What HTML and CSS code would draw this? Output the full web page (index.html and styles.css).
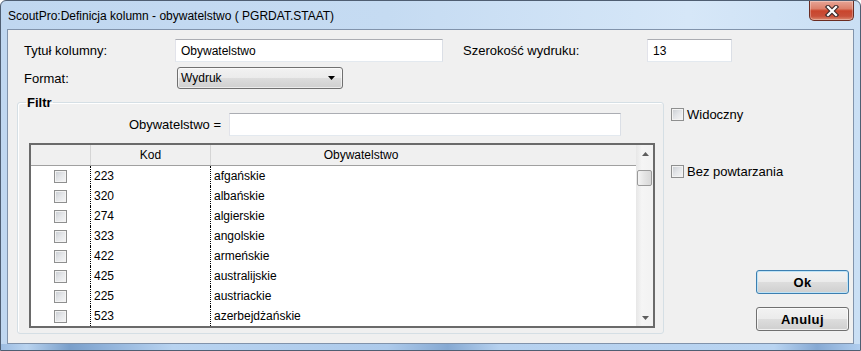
FILE: index.html
```html
<!DOCTYPE html>
<html lang="pl">
<head>
  <meta charset="UTF-8">
  <title>ScoutPro:Definicja kolumn</title>
  <link rel="stylesheet" href="styles.css">
</head>
<body>
  <div class="window">
    <!-- Pasek tytułu -->
    <div class="titlebar">
      <span class="title">ScoutPro:Definicja kolumn - obywatelstwo ( PGRDAT.STAAT)</span>
      <button class="close" title="Zamknij">
        <svg width="16" height="12" viewBox="0 0 16 12">
          <path d="M4 2 L12 10 M12 2 L4 10" stroke="#3b2b2b" stroke-width="4.4" stroke-linecap="square" fill="none"/>
          <path d="M4 2 L12 10 M12 2 L4 10" stroke="#fff" stroke-width="2.2" stroke-linecap="square" fill="none"/>
        </svg>
      </button>
    </div>

    <div class="client">
      <!-- Tytuł i szerokość -->
      <div class="row row-top">
        <label class="lbl lbl-title">Tytuł kolumny:</label>
        <input class="edit edit-title" type="text" value="Obywatelstwo">
        <label class="lbl lbl-width">Szerokość wydruku:</label>
        <input class="edit edit-width" type="text" value="13">
      </div>

      <!-- Format -->
      <div class="row row-format">
        <label class="lbl lbl-format">Format:</label>
        <div class="combo">
          <span>Wydruk</span>
          <svg class="combo-arrow" width="7" height="4" viewBox="0 0 7 4"><path d="M0 0 H7 L3.5 4 Z" fill="#000"/></svg>
        </div>
      </div>

      <div class="main">
        <!-- Filtr -->
        <fieldset class="filter">
          <legend>Filtr</legend>
          <div class="filter-inner">
            <div class="filter-row">
              <label class="filter-label">Obywatelstwo =</label>
              <input class="edit edit-filter" type="text" value="">
            </div>

            <div class="grid">
              <div class="grid-data">
                <div class="grid-row grid-head">
                  <div class="cell"></div>
                  <div class="cell">Kod</div>
                  <div class="cell">Obywatelstwo</div>
                  <div class="cell"></div>
                </div>
                <div class="grid-row"><div class="cell"><span class="check"></span></div><div class="cell">223</div><div class="cell">afgańskie</div><div class="cell"></div></div>
                <div class="grid-row"><div class="cell"><span class="check"></span></div><div class="cell">320</div><div class="cell">albańskie</div><div class="cell"></div></div>
                <div class="grid-row"><div class="cell"><span class="check"></span></div><div class="cell">274</div><div class="cell">algierskie</div><div class="cell"></div></div>
                <div class="grid-row"><div class="cell"><span class="check"></span></div><div class="cell">323</div><div class="cell">angolskie</div><div class="cell"></div></div>
                <div class="grid-row"><div class="cell"><span class="check"></span></div><div class="cell">422</div><div class="cell">armeńskie</div><div class="cell"></div></div>
                <div class="grid-row"><div class="cell"><span class="check"></span></div><div class="cell">425</div><div class="cell">australijskie</div><div class="cell"></div></div>
                <div class="grid-row"><div class="cell"><span class="check"></span></div><div class="cell">225</div><div class="cell">austriackie</div><div class="cell"></div></div>
                <div class="grid-row"><div class="cell"><span class="check"></span></div><div class="cell">523</div><div class="cell">azerbejdżańskie</div><div class="cell"></div></div>
              </div>

              <!-- Pasek przewijania -->
              <div class="scrollbar">
                <div class="sb-btn">
                  <svg width="7" height="4" viewBox="0 0 7 4"><path d="M0 4 L3.5 0 L7 4 Z" fill="#5e5e5e"/></svg>
                </div>
                <div class="sb-track"><div class="sb-thumb"></div></div>
                <div class="sb-btn">
                  <svg width="7" height="4" viewBox="0 0 7 4"><path d="M0 0 H7 L3.5 4 Z" fill="#5e5e5e"/></svg>
                </div>
              </div>
            </div>
          </div>
        </fieldset>

        <!-- Opcje i przyciski -->
        <div class="side">
          <label class="opt"><span class="check"></span>Widoczny</label>
          <label class="opt opt-second"><span class="check"></span>Bez powtarzania</label>
          <div class="buttons">
            <button class="btn btn-default">Ok</button>
            <button class="btn">Anuluj</button>
          </div>
        </div>
      </div>
    </div>
  </div>
</body>
</html>
```

FILE: styles.css
```css
* {
  box-sizing: border-box;
}

html,
body {
  margin: 0;
  padding: 0;
}

body {
  width: 861px;
  height: 351px;
  overflow: hidden;
  background: #fff;
  font-family: "Liberation Sans", Arial, sans-serif;
  font-size: 13px;
  color: #000;
}

/* Okno */
.window {
  display: flex;
  flex-direction: column;
  width: 861px;
  height: 351px;
  padding: 0 6px 6px;
  border: 1px solid #4f5e72;
  border-radius: 6px 6px 0 0;
  background:
    linear-gradient(to right, #9dbde2 0%, #b9d3ef 3%, #7a9fca 8%, #8fb1d9 12%, #b8d3f0 20%, #adcaeb 45%, #86a9d2 52%, #b6d1ef 58%, #b9d4f1 90%, #86a9d3 95%, #b0cdee 100%) left bottom / 100% 6px no-repeat,
    linear-gradient(to right, #c0d7f0 0%, #c5dbf2 45%, #d6e7f8 80%, #cadff4 100%);
}

.titlebar {
  display: flex;
  align-items: flex-start;
  height: 28px;
}

.title {
  padding: 8px 0 0 1px;
  font-size: 12px;
  line-height: 14px;
  color: #000;
}

.close {
  display: flex;
  align-items: center;
  justify-content: center;
  width: 45px;
  height: 20px;
  margin-left: auto;
  padding: 0;
  border: 1px solid #6a2c22;
  border-top: none;
  border-radius: 0 0 5px 5px;
  background: linear-gradient(#e7a596 0%, #dc806b 40%, #c9452c 52%, #c8503a 80%, #dc8a70 100%);
  box-shadow: inset 0 0 0 1px rgba(255, 255, 255, 0.3);
}

.client {
  flex: 1;
  padding: 9px 0 0 9px;
  border: 1px solid #8193ab;
  background: #f0f0f0;
}

/* Wiersze formularza */
.row {
  display: flex;
  align-items: center;
  padding-left: 7px;
}

.row-top {
  height: 23px;
}

.row-format {
  height: 22px;
  margin-top: 5px;
}

.lbl {
  flex: none;
}

.lbl-title {
  width: 151px;
}

.lbl-width {
  width: 184px;
  margin-left: 20px;
}

.lbl-format {
  width: 153px;
}

.edit {
  height: 23px;
  margin: 0;
  padding: 0 5px;
  border: 1px solid;
  border-color: #abadb3 #dbdfe6 #e3e9ef #e2e3ea;
  background: #fff;
  font-family: "Liberation Sans", Arial, sans-serif;
  font-size: 12px;
  color: #000;
  outline: none;
}

.edit-title {
  width: 268px;
}

.edit-width {
  width: 85px;
}

.edit-filter {
  width: 392px;
  margin-left: 8px;
}

.combo {
  display: flex;
  align-items: center;
  width: 166px;
  height: 22px;
  padding: 0 7px 0 3px;
  border: 1px solid #707070;
  border-radius: 3px;
  background: linear-gradient(#f2f2f2 0%, #ebebeb 50%, #dddddd 51%, #cfcfcf 100%);
  box-shadow: inset 0 0 0 1px rgba(255, 255, 255, 0.6);
  font-size: 12px;
}

.combo-arrow {
  margin-left: auto;
}

/* Filtr */
.main {
  display: flex;
  margin-top: 6px;
}

.filter {
  flex: none;
  width: 647px;
  margin: 0;
  padding: 0;
  border: 1px solid #d5dfe5;
  border-radius: 3px;
  box-shadow: inset 1px 1px 0 #fff;
}

.filter legend {
  margin-left: 8px;
  padding: 0 1px;
  font-weight: bold;
  font-size: 13px;
  line-height: 15px;
}

.filter-inner {
  padding: 3px 0 5px 11px;
}

.filter-row {
  display: flex;
  align-items: center;
}

.filter-label {
  width: 192px;
  text-align: right;
}

.grid {
  display: flex;
  width: 626px;
  margin-top: 7px;
  border: 2px solid #6a6a6a;
  background: #fff;
}

.grid-data {
  flex: 1;
}

.grid-row {
  display: grid;
  grid-template-columns: 60px 120px 300px 1fr;
  height: 20px;
  font-size: 12px;
  line-height: 20px;
}

.grid-row .cell {
  padding-left: 3px;
  white-space: nowrap;
}

.grid-row .cell:nth-child(1),
.grid-row .cell:nth-child(2) {
  border-right: 1px dotted #000;
}

.grid-row .cell:first-child {
  display: flex;
  align-items: center;
  justify-content: center;
  padding-left: 0;
}

.grid-head {
  height: 21px;
  border-bottom: 1px solid #a0a0a0;
  background: #f0f0f0;
}

.grid-head .cell {
  padding-left: 0;
  text-align: center;
}

.grid-head .cell:nth-child(1),
.grid-head .cell:nth-child(2) {
  border-right: 1px solid #d5d5d5;
}

.scrollbar {
  display: flex;
  flex-direction: column;
  width: 17px;
  border-left: 1px solid #e8e8e8;
  background: linear-gradient(to right, #e9e9e9, #f5f5f5 30%, #f2f2f2);
}

.sb-btn {
  display: flex;
  align-items: center;
  justify-content: center;
  height: 17px;
}

.sb-track {
  flex: 1;
}

.sb-thumb {
  height: 16px;
  margin: 8px 1px 0 0;
  border: 1px solid #9a9a9a;
  border-radius: 2px;
  background: linear-gradient(to right, #f4f4f4, #e4e4e4 50%, #d8d8d8);
}

/* Pola wyboru */
.check {
  display: inline-block;
  flex: none;
  width: 13px;
  height: 13px;
  border: 1px solid #8e8f8f;
  background: linear-gradient(135deg, #c8ccd1 0%, #e4e6e9 50%, #f6f6f6 100%);
  box-shadow: inset 0 0 0 1px #f3f3f3;
}

.side {
  flex: 1;
  display: flex;
  flex-direction: column;
  padding: 13px 4px 3px 7px;
}

.opt {
  display: flex;
  align-items: center;
  gap: 3px;
  height: 13px;
  line-height: 13px;
}

.opt-second {
  margin-top: 44px;
}

.buttons {
  display: flex;
  flex-direction: column;
  align-items: flex-end;
  gap: 13px;
  margin-top: auto;
}

.btn {
  width: 93px;
  height: 24px;
  padding: 0;
  border: 1px solid #707070;
  border-radius: 3px;
  background: linear-gradient(#f2f2f2 0%, #ebebeb 50%, #dddddd 51%, #cfcfcf 100%);
  box-shadow: inset 0 0 0 1px rgba(255, 255, 255, 0.7);
  font-family: "Liberation Sans", Arial, sans-serif;
  font-size: 13px;
  font-weight: bold;
  letter-spacing: 0.4px;
  color: #000;
}

.btn-default {
  border-color: #3c7fb1;
  box-shadow: inset 0 0 0 1px #bfe3f6;
}
```
